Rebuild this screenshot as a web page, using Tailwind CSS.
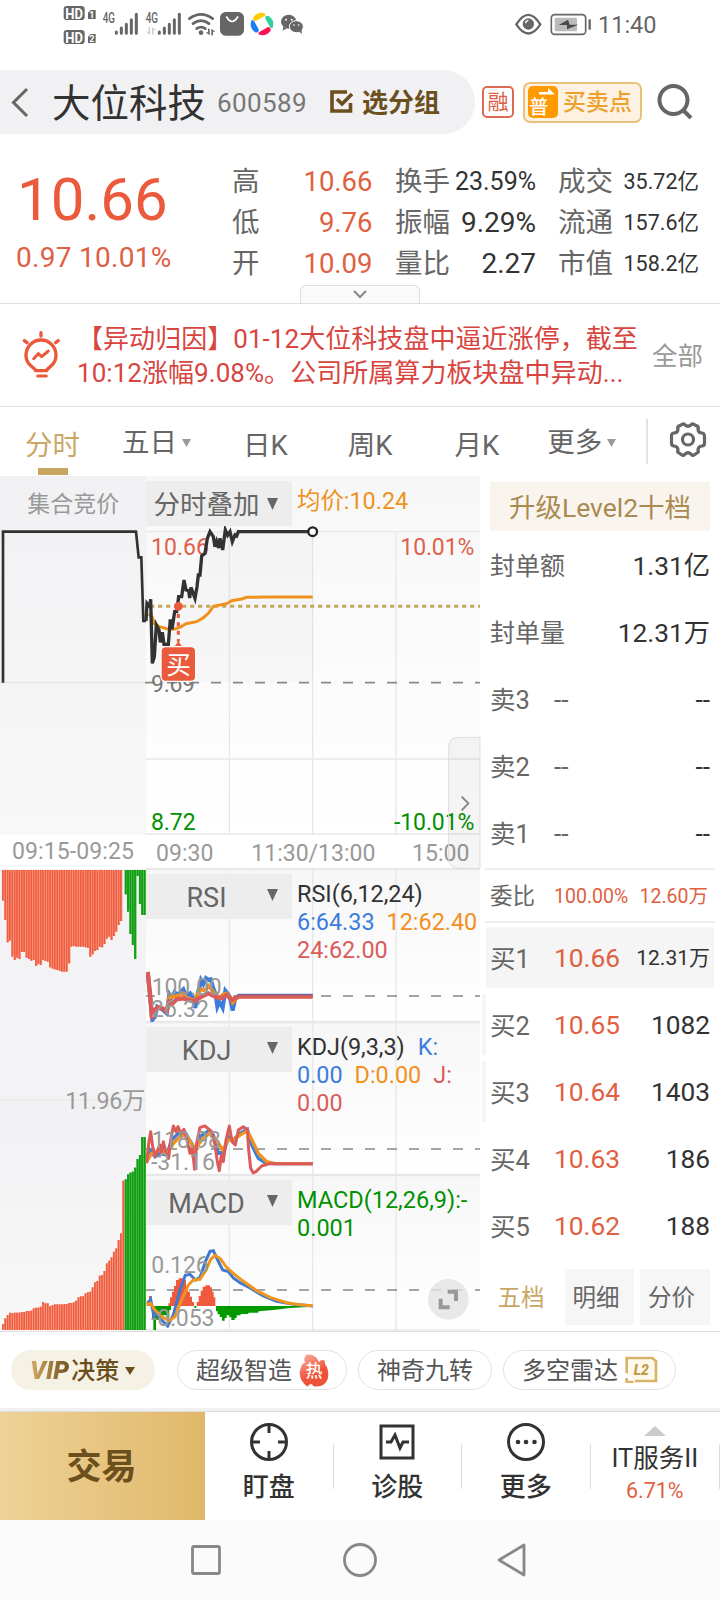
<!DOCTYPE html>
<html lang="zh-CN">
<head>
    <meta charset="UTF-8">
    <meta name="viewport" content="width=device-width, initial-scale=1.0">
    <title>大位科技 600589</title>
    <script src="https://cdn.jsdelivr.net/npm/@tailwindcss/browser@4"></script>
</head>
<body class="w-[720px] h-[1600px] overflow-hidden bg-white text-[#323232] font-['Roboto','Noto_Sans_CJK_SC',sans-serif]">

    <!-- Status bar -->
    <div class="h-[70px] flex items-start">
        <svg class="ml-[60px] w-[250px] h-[50px]" viewBox="180 0 750 150" fill="#666">
            <rect x="191" y="18" width="63" height="42" rx="10"/>
            <rect x="191" y="90" width="63" height="42" rx="10"/>
            <g fill="#fff" font-weight="700" font-size="46">
                <text x="196" y="56" textLength="53" lengthAdjust="spacingAndGlyphs">HD</text>
                <text x="196" y="128" textLength="53" lengthAdjust="spacingAndGlyphs">HD</text>
            </g>
            <path d="M264 38l8-8h15v27h-23zM264 110l8-8h15v27h-23z"/>
            <g fill="#fff" font-weight="700" font-size="27">
                <text x="268" y="54">1</text>
                <text x="268" y="126">2</text>
            </g>
            <g font-weight="500" font-size="43">
                <text x="308" y="69" textLength="37" lengthAdjust="spacingAndGlyphs">4G</text>
                <text x="437" y="69" textLength="37" lengthAdjust="spacingAndGlyphs">4G</text>
            </g>
            <g stroke="#666" stroke-width="9" stroke-linecap="round">
                <path d="M349 96v4M364 84v16M379 73v27M394 59v41M409 43v57"/>
                <path d="M478 96v4M493 84v16M508 73v27M523 59v41M538 43v57"/>
            </g>
            <path d="M450 82v22l-12-9h8V82zM456 104V82l12 9h-8v13z" fill="#ccc"/>
            <g fill="none" stroke="#666" stroke-width="8" stroke-linecap="round">
                <path d="M568 56q35-26 70 0M579 71q24-18 48 0M590 86q13-9 26 0"/>
            </g>
            <circle cx="603" cy="98" r="7"/>
            <path d="M629 86v20l-12-9h7V86zM634 106V86l12 9h-7v11z"/>
            <rect x="660" y="36" width="72" height="71" rx="17"/>
            <path d="M680 51q16 27 33 0" fill="none" stroke="#fff" stroke-width="5" stroke-linecap="round"/>
            <g transform="translate(786 72)">
                <path d="M-27-19Q-12-40 10-31Q14-27 4-22L-15-11Q-26-5-27-19z" fill="#ffcb00"/>
                <path d="M19-25Q40-12 32 11Q28 17 23 7L11-14Q6-24 19-25z" fill="#2fd0a0"/>
                <path d="M26 20Q10 40-10 31Q-14 27-4 22L14 11Q26 5 26 20z" fill="#ff0f55"/>
                <path d="M-18 26Q-40 12-32-10Q-28-16-22-6L-11 14Q-6 25-18 26z" fill="#1c7df5"/>
            </g>
            <ellipse cx="866" cy="65" rx="23" ry="21"/>
            <path d="M850 80l-2 12 13-7z"/>
            <ellipse cx="889" cy="80" rx="21" ry="18" stroke="#fff" stroke-width="3"/>
            <path d="M896 94l10 8-2-14z"/>
            <g fill="#fff">
                <circle cx="858" cy="59" r="3"/><circle cx="875" cy="59" r="3"/>
                <circle cx="882" cy="75" r="2.5"/><circle cx="896" cy="75" r="2.5"/>
            </g>
        </svg>
        <svg class="ml-[204px] w-[80px] h-[50px]" viewBox="462 0 240 150" fill="none" stroke="#666">
            <path d="M469 73Q505 16 541 73Q505 128 469 73z" stroke-width="7"/>
            <circle cx="505" cy="72" r="17" fill="#666" stroke="none"/>
            <path d="M497 70q0-8 8-9" stroke="#fff" stroke-width="4"/>
            <rect x="574" y="44" width="103" height="59" rx="10" stroke-width="5"/>
            <rect x="584" y="53" width="67" height="41" rx="4" fill="#bbb" stroke="none"/>
            <path d="M624 59l-28 16h25v13l34-14h-26z" fill="#4a4a4a" stroke="none"/>
            <path d="M689 58v31" stroke-width="7"/>
        </svg>
        <span class="ml-[4px] mt-[9px] text-[23.500px] leading-[32px] text-[#666]">11:40</span>
    </div>

    <!-- Stock header -->
    <div class="h-[64px] flex items-center">
        <div class="w-[475px] h-[64px] bg-[#f1f1f4] rounded-r-full flex items-center">
            <svg class="ml-[10px] w-[20px] h-[32px]" viewBox="0 0 20 32" fill="none" stroke="#666" stroke-width="3"><path d="M17 3L3.500 16.500 17 30"/></svg>
            <span class="ml-[22px] pt-[4px] text-[38.500px] leading-[60px]">大位科技</span>
            <span class="ml-[11px] pt-[2px] text-[26px] tracking-[0.4px] text-[#777]">600589</span>
            <svg class="ml-[22px] w-[26px] h-[26px]" viewBox="0 0 26 26" fill="none" stroke="#6b4f1d" stroke-width="3.600"><path d="M18 3H3v19h18.500v-8M8 10l5 5L23 5"/></svg>
            <span class="ml-[7px] pt-[3px] text-[26px] font-bold text-[#6b4f1d]">选分组</span>
        </div>
        <div class="ml-[7px] w-[32px] h-[32px] border-2 border-[#dd6a55] rounded-[5px] flex items-center justify-center text-[21px] leading-none text-[#dd5a44]">融</div>
        <div class="ml-[9px] w-[119px] h-[41px] border-2 border-[#e9c27a] rounded-[7px] bg-[#fdf1e2] flex items-center">
            <svg class="ml-[3px] w-[30px] h-[32px]" viewBox="0 0 30 32">
                <rect width="30" height="32" rx="5" fill="#ff9900"/>
                <path d="M11 8.500h16L20 2v4h-9z" fill="#fff"/>
                <text x="1" y="28" font-size="19.500" font-weight="500" fill="#fff">普</text>
            </svg>
            <span class="ml-[5px] pt-[2px] text-[23px] font-medium text-[#eea02e]">买卖点</span>
        </div>
        <svg class="ml-[14px] w-[38px] h-[38px]" viewBox="0 0 38 38" fill="none" stroke="#666" stroke-width="4"><circle cx="17.500" cy="17" r="14"/><path d="M27 27l8 8"/></svg>
    </div>

    <!-- Quote -->
    <div class="relative h-[170px] border-b border-[#dfdfdf] flex text-[27.500px]">
        <div class="w-[232px] pl-[16px] text-[#eb5a3c]">
            <div class="mt-[31px] text-[60px] leading-[70px] pl-[1px]">10.66</div>
            <div class="mt-[5px] text-[28px] leading-[36px] whitespace-nowrap text-[#de6044] tracking-[0.3px]">0.97 10.01%</div>
        </div>
        <div class="w-[140.500px] pt-[27px] leading-[41px] text-[#e0603f]">
            <div class="flex justify-between"><span class="text-[#666]">高</span><span>10.66</span></div>
            <div class="flex justify-between"><span class="text-[#666]">低</span><span>9.76</span></div>
            <div class="flex justify-between"><span class="text-[#666]">开</span><span>10.09</span></div>
        </div>
        <div class="ml-[22.500px] w-[141px] pt-[27px] leading-[41px]">
            <div class="flex justify-between"><span class="text-[#666]">换手</span><span class="text-[25px]">23.59%</span></div>
            <div class="flex justify-between"><span class="text-[#666]">振幅</span><span class="text-[28px]">9.29%</span></div>
            <div class="flex justify-between"><span class="text-[#666]">量比</span><span class="text-[28px]">2.27</span></div>
        </div>
        <div class="ml-[22px] w-[141px] pt-[27px] leading-[41px]">
            <div class="flex justify-between"><span class="text-[#666]">成交</span><span class="text-[21.500px]">35.72亿</span></div>
            <div class="flex justify-between"><span class="text-[#666]">流通</span><span class="text-[21.500px]">157.6亿</span></div>
            <div class="flex justify-between"><span class="text-[#666]">市值</span><span class="text-[21.500px]">158.2亿</span></div>
        </div>
        <div class="absolute left-[300px] bottom-0 w-[120px] h-[18px] border border-b-0 border-[#dfdfdf] rounded-t-[6px] bg-[#fafafa] flex justify-center">
            <svg class="mt-[4px] w-[16px] h-[10px]" viewBox="0 0 16 10" fill="none" stroke="#888" stroke-width="2"><path d="M2 1l6 6 6-6"/></svg>
        </div>
    </div>

    <!-- Notice -->
    <div class="h-[103px] border-b border-[#dfdfdf] flex items-center">
        <svg class="ml-[21px] w-[40px] h-[50px]" viewBox="0 0 120 150" fill="none" stroke="#e9593a" stroke-width="10" stroke-linecap="round" stroke-linejoin="round">
            <path d="M44 122h33M44 120L24 102A45 45 0 1 1 96 102L77 120M60 8v10M10 32l8 6M112 32l-8 6"/>
            <path d="M38 86l14-15 10 9 20-17" stroke-width="9"/>
            <path d="M50 138h26" stroke-width="9"/>
        </svg>
        <p class="ml-[16px] pt-[2px] w-[575px] text-[26px] leading-[34px] tracking-[0.05px] text-[#d84540] whitespace-nowrap">【异动归因】01-12大位科技盘中逼近涨停，截至<br>10:12涨幅9.08%。公司所属算力板块盘中异动...</p>
        <span class="pt-[2px] text-[25.500px] text-[#999]">全部</span>
    </div>

    <!-- Period tabs -->
    <div class="h-[69px] flex text-[27.500px] leading-[40px] text-[#666] whitespace-nowrap">
        <div class="ml-[25px] w-[55px] pt-[19px] text-[#c9a665] flex flex-col items-center">分时<i class="mt-[2px] w-[30px] h-[7px] bg-[#c9a660]"></i></div>
        <div class="ml-[42px] pt-[16px] flex items-center h-[56px]">五日<svg class="ml-[5px] w-[9px] h-[8px]" viewBox="0 0 9 8" fill="#999"><path d="M0 0h9L4.500 8z"/></svg></div>
        <div class="ml-[52px] pt-[19px]">日K</div>
        <div class="ml-[60px] pt-[19px]">周K</div>
        <div class="ml-[62px] pt-[19px]">月K</div>
        <div class="ml-[48px] pt-[16px] flex items-center h-[56px]">更多<svg class="ml-[5px] w-[9px] h-[8px]" viewBox="0 0 9 8" fill="#999"><path d="M0 0h9L4.500 8z"/></svg></div>
        <div class="ml-auto mt-[12px] w-[2px] h-[45px] bg-[#e2e2e2]"></div>
        <svg class="ml-[21px] mr-[13px] mt-[14px] w-[38px] h-[38px]" viewBox="0 0 38 38" fill="none" stroke="#666" stroke-width="3.200" stroke-linejoin="round">
            <path d="M13 3.500Q15 2 16 4Q19 6.500 22 4Q23 2 25 3.500L28 5Q30 6 29 8Q29 12 33 12Q35 12 35.500 15V22Q35.500 25 33 25Q29 25.500 29 29Q30 31 28 32L25 34Q23 35 22 33Q19 30.500 16 33Q15 35 13 34L10 32Q8 31 9 29Q9 25.500 5 25Q2.500 25 2.500 22V15Q2.500 12 5 12Q9 12 9 8Q8 6 10 5z"/>
            <circle cx="19" cy="18.500" r="5.500"/>
        </svg>
    </div>

    <!-- Charts and order book -->
    <div class="h-[855px] flex">

        <!-- Call auction column -->
        <div class="w-[146px]">
            <svg class="block w-[146px] h-[393px]" viewBox="0 18 438 1179" fill="none">
                <defs>
                    <linearGradient id="auctionBg" x1="0" y1="0" x2="0" y2="1"><stop offset="0" stop-color="#f1f1f4"/><stop offset="1" stop-color="#f8f8f8"/></linearGradient>
                </defs>
                <rect x="0" y="18" width="438" height="1077" fill="url(#auctionBg)"/>
                <path d="M0 638H438" stroke="#e4e4e6" stroke-width="4"/>
                <path d="M9 638V185H408L416 262H424L430 453H438" stroke="#323232" stroke-width="8"/>
                <text x="82" y="125" font-size="69" fill="#999">集合竞价</text>
                <text x="36" y="1166" font-size="69" fill="#999" textLength="366">09:15-09:25</text>
            </svg>
            <svg class="block w-[146px] h-[462px]" viewBox="0 27 438 1386">
                <rect x="0" y="27" width="438" height="690" fill="#f3f3f5"/>
                <rect x="0" y="717" width="438" height="696" fill="url(#auctionBg)"/>
                <path d="M0 719H438" stroke="#e8e8e8" stroke-width="4"/>
                <g id="bars"></g>
                <text x="196" y="746" font-size="70" fill="#999" textLength="240">11.96万</text>
            </svg>
        </div>

        <!-- Intraday column -->
        <div class="w-[334px]">
            <!-- price -->
            <div class="relative h-[393px]">
                <svg class="absolute inset-0 w-[334px] h-[393px] overflow-visible" viewBox="438 18 1002 1179" fill="none">
                    <defs>
                        <linearGradient id="panelBg" x1="0" y1="0" x2="0" y2="1"><stop offset="0" stop-color="#f7f7f7"/><stop offset="1" stop-color="#fff"/></linearGradient>
                    </defs>
                    <rect x="438" y="18" width="1002" height="1077" fill="url(#panelBg)"/>
                    <path d="M438 185H1440M438 867H1440M438 1092H1440M688 185V1095M938 185V1095M1188 185V1095M438 1196H1440" stroke="#e8e8e8" stroke-width="4"/>
                    <path d="M452 400L457 580 463 560 469 465 488 490 505 523 524 425 552 330 572 350 585 385 605 260 630 185H938V638H452z" fill="#000" fill-opacity=".018"/>
                    <path d="M435 638H1440" stroke="#888" stroke-width="5" stroke-dasharray="30 36"/>
                    <g font-size="69">
                        <text x="453" y="255" fill="#e0604a" textLength="174">10.66</text>
                        <text x="1201" y="255" fill="#e0604a" textLength="222">10.01%</text>
                        <text x="453" y="666" fill="#777" textLength="132">9.69</text>
                        <text x="453" y="1080" fill="#009100" textLength="134">8.72</text>
                        <text x="1182" y="1080" fill="#009100" textLength="241">-10.01%</text>
                        <g fill="#999">
                            <text x="468" y="1172" textLength="172">09:30</text>
                            <text x="754" y="1172" textLength="372">11:30/13:00</text>
                            <text x="1236" y="1172" textLength="172">15:00</text>
                        </g>
                    </g>
                    <path d="M450 409H1440" stroke="#c8a860" stroke-width="9" stroke-dasharray="13 11"/>
                    <path d="M446 432L456 440 464 462 478 470 500 476 520 478 540 472 558 461 590 455 610 443 625 430 640 409 680 401 695 392 725 387 740 382 800 381H938" stroke="#f0911e" stroke-width="9"/>
                    <path d="M438 453L441 400 449 410 452 388 457 580 463 560 469 465 477 480 481 517 487 487 492 523H505L511 448 516 478 524 425 530 425 536 380H545L552 330 558 360 566 362 569 384 573 352 585 385 591 350 595 315H600L605 258 615 250 622 205 630 185 640 200 645 230 650 214 656 234 660 205 668 240 676 180 683 196 690 185 697 215 705 195 710 198 715 185H938" stroke="#323232" stroke-width="10"/>
                    <circle cx="938" cy="185" r="13" fill="#fff" stroke="#222" stroke-width="7"/>
                    <circle cx="535" cy="409" r="13" fill="#eb5a3c"/>
                    <path d="M535 432V515" stroke="#eb5a3c" stroke-width="9" stroke-dasharray="12 13"/>
                    <path d="M522 532l13-18 13 18z" fill="#eb5a3c"/>
                    <rect x="483" y="530" width="104" height="104" rx="14" fill="#eb5a3c" stroke="#fff" stroke-width="4"/>
                    <text x="499" y="612" font-size="74" fill="#fff">买</text>
                    <path d="M1440 802H1376Q1346 802 1346 832V1165Q1346 1195 1376 1195H1440z" fill="#000" fill-opacity=".04" stroke="#ddd" stroke-width="3"/>
                    <path d="M1386 980l20 20-20 21" transform="translate(-20 0)" stroke="none"/>
                    <path d="M1386 980l20 20-20 21" transform="translate(-1 0)" stroke="#888" stroke-width="6"/>
                </svg>
                <div class="relative flex pt-[5px]">
                    <div class="w-[146px] h-[45px] bg-[#ededed] flex items-center text-[26.500px] text-[#666]"><span class="w-[121px] pt-[3px] text-center">分时叠加</span><svg class="w-[11px] h-[12px]" viewBox="0 0 11 12" fill="#666"><path d="M0 0h11L5.500 12z"/></svg></div>
                    <div class="ml-[5px] mt-[5px] text-[23.400px] leading-[30px] text-[#f0911e]">均价:10.24</div>
                </div>
            </div>

            <!-- RSI -->
            <div class="relative h-[153px]">
                <svg class="absolute inset-0 w-[334px] h-[153px]" viewBox="438 27 1002 459" fill="none">
                    <rect x="438" y="27" width="1002" height="459" fill="url(#panelBg)"/>
                    <path d="M438 29H1440M438 484H1440M688 27V486M938 27V486M1188 27V486" stroke="#e8e8e8" stroke-width="4"/>
                    <path d="M435 408H1440" stroke="#888" stroke-width="5" stroke-dasharray="30 36"/>
                    <path d="M443 336L450 405 457 480 465 470 472 440 486 448 500 460 508 402 515 412 524 396 530 405 540 398 550 388 558 408 570 400 578 415 586 444 594 395 598 385 603 360 610 372 618 354 626 360 632 358 640 385 646 400 652 440 658 425 668 444 676 392 684 402 690 412 698 452 706 415 716 407H938" stroke="#3c7cdc" stroke-width="12"/>
                    <path d="M443 336L455 465 475 440 500 450 508 412 530 408 550 400 560 414 585 422 596 395 605 388 615 392 625 378 636 390 645 402 660 415 668 404 680 400 690 412 698 428 716 409H938" stroke="#f0911e" stroke-width="11"/>
                    <path d="M443 336L450 400 456 476 462 450 475 442 488 446 500 455 508 425 518 430 530 418 550 415 565 420 580 424 605 410 625 400 650 412 665 414 680 405 695 420 716 410H938" stroke="#d95c5a" stroke-width="13"/>
                    <path d="M714 404H938" stroke="#7a5f94" stroke-width="4"/>
                    <g font-size="69" fill="#999">
                        <text x="455" y="405" textLength="210">100.00</text>
                        <text x="453" y="472" textLength="174">26.32</text>
                    </g>
                </svg>
                <div class="relative flex pt-[5px]">
                    <div class="w-[146px] h-[45px] bg-[#ededed] flex items-center text-[27px] text-[#666]"><span class="w-[121px] pt-[3px] text-center">RSI</span><svg class="-mt-[3px] w-[11px] h-[12px]" viewBox="0 0 11 12" fill="#666"><path d="M0 0h11L5.500 12z"/></svg></div>
                    <div class="ml-[5px] mt-[6px] text-[23.400px] leading-[28px] whitespace-nowrap">RSI(6,12,24)<br><span class="text-[#3c7cdc]">6:64.33</span><span class="ml-[12px] text-[#f0911e]">12:62.40</span><br><span class="text-[#d95c5a]">24:62.00</span></div>
                </div>
            </div>

            <!-- KDJ -->
            <div class="relative h-[153px]">
                <svg class="absolute inset-0 w-[334px] h-[153px]" viewBox="438 -204 1002 459" fill="none">
                    <rect x="438" y="-204" width="1002" height="459" fill="url(#panelBg)"/>
                    <path d="M438 -202H1440M438 253H1440M688 -204V255M938 -204V255M1188 -204V255" stroke="#e8e8e8" stroke-width="4"/>
                    <path d="M435 177H1440" stroke="#888" stroke-width="5" stroke-dasharray="30 36"/>
                    <path d="M440 215L450 180 465 200 480 190 500 195 515 150 535 130 555 128 575 160 585 180 600 140 622 125 640 135 655 190 672 185 685 140 700 150 720 130 742 118 755 165 775 205 795 218 820 221H938" stroke="#3c7cdc" stroke-width="10"/>
                    <path d="M440 215L455 190 480 182 505 185 520 160 545 135 560 138 585 178 605 150 628 130 645 145 668 180 685 150 705 145 742 122 756 150 775 190 800 215 825 221H938" stroke="#f0911e" stroke-width="10"/>
                    <path d="M440 220L446 160 452 125 458 170 466 200 475 175 480 165 484 190 490 155 500 195 506 205 512 150 520 108 528 125 534 110 542 130 552 118 560 145 570 190 576 170 584 238 590 160 600 112 615 108 635 125 645 165 652 215 658 242 664 195 670 215 678 150 688 108 696 155 706 165 715 120 730 110 742 120 746 180 752 235 760 249 768 245 785 228 810 221H938" stroke="#dc5b58" stroke-width="9" stroke-linejoin="round"/>
                    <g font-size="69" fill="#999">
                        <text x="455" y="174" textLength="208">118.98</text>
                        <text x="453" y="240" textLength="192">-31.16</text>
                    </g>
                </svg>
                <div class="relative flex pt-[5px]">
                    <div class="w-[146px] h-[45px] bg-[#ededed] flex items-center text-[27px] text-[#666]"><span class="w-[121px] pt-[3px] text-center">KDJ</span><svg class="-mt-[3px] w-[11px] h-[12px]" viewBox="0 0 11 12" fill="#666"><path d="M0 0h11L5.500 12z"/></svg></div>
                    <div class="ml-[5px] mt-[6px] text-[23.400px] leading-[28px] whitespace-nowrap">KDJ(9,3,3)<span class="ml-[13px] text-[#3c7cdc]">K:<br>0.00</span><span class="ml-[12px] text-[#f0911e]">D:0.00</span><span class="ml-[12px] text-[#d95c5a]">J:<br>0.00</span></div>
                </div>
            </div>

            <!-- MACD -->
            <div class="relative h-[156px]">
                <svg class="absolute inset-0 w-[334px] h-[156px]" viewBox="438 255 1002 468" fill="none">
                    <rect x="438" y="255" width="1002" height="468" fill="url(#panelBg)"/>
                    <path d="M438 257H1440M438 720H1440M688 255V720M938 255V720M1188 255V720" stroke="#e8e8e8" stroke-width="4"/>
                    <path d="M435 600H1440" stroke="#888" stroke-width="5" stroke-dasharray="30 36"/>
                    <path d="M440 648V632H447V618H455V648zM505 648V640H510V622H516V605H522V588H528V570H536V565H550V570H558V590H564V605H570V620H576V636H582V648zM590 648V636H596V618H602V602H608V590H616V586H630V592H636V605H641V622H646V648z" fill="#f05a3c"/>
                    <path d="M456 648V690H460V720H468V690H476V676H500V684H508V660H513V648zM583 648v6h6v-6zM648 648V664H653V673H659V681H666V692H674V684H680V676H688V682H694V690H704V684H710V676H722V672H745V668H775V664L820 660 870 654 938 650V648z" fill="#009a00"/>
                    <path d="M444 640L452 628 462 680 470 670 485 690 503 708 520 675 540 600 556 556 570 553 586 570 600 562 618 510 630 484 640 482 652 508 668 540 685 545 700 564 720 578 750 594 790 618 830 634 880 643 938 648" stroke="#3f79d0" stroke-width="9"/>
                    <path d="M440 644L452 640 465 660 485 680 508 692 525 680 545 630 565 585 580 570 600 568 618 540 632 508 645 496 660 505 680 532 700 550 730 574 770 602 810 622 860 638 900 644 938 647" stroke="#f0961e" stroke-width="9"/>
                    <g font-size="69" fill="#999">
                        <text x="454" y="549" textLength="172">0.126</text>
                        <text x="453" y="708" textLength="190">-0.053</text>
                    </g>
                    <circle cx="1345" cy="628" r="61" fill="#e2e2e2" fill-opacity=".8"/>
                    <path d="M1343 605h25v28M1322 626v26h27" stroke="#999" stroke-width="12"/>
                </svg>
                <div class="relative flex pt-[5px]">
                    <div class="w-[146px] h-[45px] bg-[#ededed] flex items-center text-[27px] text-[#666]"><span class="w-[121px] pt-[3px] text-center">MACD</span><svg class="-mt-[3px] w-[11px] h-[12px]" viewBox="0 0 11 12" fill="#666"><path d="M0 0h11L5.500 12z"/></svg></div>
                    <div class="ml-[5px] mt-[6px] text-[23.500px] leading-[28px] whitespace-nowrap text-[#009100]">MACD(12,26,9):-<br>0.001</div>
                </div>
            </div>
        </div>

        <!-- Order book -->
        <div class="w-[240px] pt-[6px] text-[26.300px]">
            <div class="ml-[10px] w-[220px] h-[49px] pt-[3px] bg-[#f9f5ee] flex items-center justify-center text-[26.500px] text-[#a98a50]">升级Level2十档</div>
            <div class="mt-[2px] pl-[10px] pr-[10px] leading-[67px]">
                <div class="flex justify-between"><span class="text-[25px] text-[#666]">封单额</span><span>1.31亿</span></div>
                <div class="flex justify-between"><span class="text-[25px] text-[#666]">封单量</span><span>12.31万</span></div>
                <div class="flex"><span class="w-[64px] text-[25.500px] text-[#666]">卖3</span><span class="text-[#666]">--</span><span class="ml-auto">--</span></div>
                <div class="flex"><span class="w-[64px] text-[25.500px] text-[#666]">卖2</span><span class="text-[#666]">--</span><span class="ml-auto">--</span></div>
                <div class="flex"><span class="w-[64px] text-[25.500px] text-[#666]">卖1</span><span class="text-[#666]">--</span><span class="ml-auto">--</span></div>
            </div>
            <div class="ml-[5px] w-[230px] h-[55px] border-y-2 border-[#eee] flex items-center pt-[2px] pl-[5px] pr-[7px] text-[19.500px] text-[#e0603f]"><span class="w-[64px] text-[22.500px] text-[#666]">委比</span><span>100.00%</span><span class="ml-auto">12.60万</span></div>
            <div class="mt-[4px] ml-[6px] w-[228px] h-[61px] bg-[#f5f5f5] flex items-center pt-[3px] pl-[4px] pr-[4px]"><span class="w-[64px] text-[25.500px] text-[#666]">买1</span><span class="text-[#e0603f]">10.66</span><span class="ml-auto text-[21px]">12.31万</span></div>
            <div class="mt-[6px] ml-[2px] w-[228px] h-[61px] border-l-4 border-[#f5f5f5] flex items-center pt-[3px] pl-[4px]"><span class="w-[64px] text-[25.500px] text-[#666]">买2</span><span class="text-[#e0603f]">10.65</span><span class="ml-auto">1082</span></div>
            <div class="mt-[6px] ml-[2px] w-[228px] h-[61px] border-l-4 border-[#f5f5f5] flex items-center pt-[3px] pl-[4px]"><span class="w-[64px] text-[25.500px] text-[#666]">买3</span><span class="text-[#e0603f]">10.64</span><span class="ml-auto">1403</span></div>
            <div class="mt-[6px] ml-[6px] w-[224px] h-[61px] flex items-center pt-[3px] pl-[4px]"><span class="w-[64px] text-[25.500px] text-[#666]">买4</span><span class="text-[#e0603f]">10.63</span><span class="ml-auto">186</span></div>
            <div class="mt-[6px] ml-[6px] w-[224px] h-[61px] flex items-center pt-[3px] pl-[4px]"><span class="w-[64px] text-[25.500px] text-[#666]">买5</span><span class="text-[#e0603f]">10.62</span><span class="ml-auto">188</span></div>
            <div class="mt-[13px] flex h-[56px] leading-[58px] text-[23.500px] text-center text-[#666]">
                <span class="ml-[10px] w-[69px] pr-[7px] text-[#c9a665]">五档</span>
                <span class="ml-[6px] w-[69px] bg-[#f6f6f6] pr-[7px]">明细</span>
                <span class="ml-[6px] w-[70px] bg-[#f6f6f6] pr-[7px]">分价</span>
            </div>
        </div>
    </div>

    <!-- Feature pills -->
    <div class="h-[77px] border-t border-[#dfdfdf] flex items-start pt-[18px] text-[24px] text-[#555]">
        <div class="ml-[11px] w-[144px] h-[40px] pt-[2px] rounded-full bg-[#f6f1e5] flex items-center pl-[19px] font-medium text-[#6b4f1d]"><span class="text-[25px] font-black italic bg-gradient-to-r from-[#d5ad63] to-[#6b4f1d] bg-clip-text text-transparent pr-[2px]">VIP</span>决策<svg class="ml-[6px] w-[10px] h-[8px]" viewBox="0 0 10 8" fill="#6b4f1d"><path d="M0 0h10L5 8z"/></svg></div>
        <div class="ml-[22px] w-[170px] h-[40px] pt-[2px] rounded-full border border-[#e2e2e2] flex items-center pl-[18px]">超级智造
            <svg class="ml-[7px] -mt-[2px] w-[30px] h-[33px]" viewBox="0 0 90 99">
                <defs><linearGradient id="hot" x1="0" y1="0" x2="0.500" y2="1"><stop offset="0" stop-color="#f9b5a8"/><stop offset="0.700" stop-color="#ee5238"/></linearGradient></defs>
                <path d="M22 2Q50-2 60 25Q66 14 78 20Q76 32 84 40Q94 70 80 86Q66 100 44 97L38 90 30 92 26 98Q0 80 2 52L10 30 18 26Q12 12 22 2z" fill="url(#hot)"/>
                <text x="20" y="70" font-size="50" font-weight="500" fill="#fff">热</text>
            </svg>
        </div>
        <div class="ml-[11px] w-[134px] h-[40px] pt-[2px] rounded-full border border-[#e2e2e2] flex items-center justify-center">神奇九转</div>
        <div class="ml-[11px] w-[173px] h-[40px] pt-[2px] rounded-full border border-[#e2e2e2] flex items-center pl-[18px]">多空雷达
            <svg class="ml-[7px] -mt-[3px] w-[33px] h-[27px]" viewBox="0 0 99 81">
                <path d="M5 52V6H82L93 16V75H30M5 66V78H26" fill="#fdf8ec" stroke="#d9b36a" stroke-width="8"/>
                <text x="26" y="57" font-size="42" font-weight="900" font-style="italic" fill="#c39a4c">L2</text>
            </svg>
        </div>
    </div>
    <div class="h-[4px] bg-[#f0f0f0] border-b border-[#dedede]"></div>

    <!-- Bottom bar -->
    <div class="h-[108px] flex text-[26px]">
        <div class="w-[205px] pt-[4px] pr-[2px] bg-gradient-to-r from-[#eed297] to-[#e0b869] flex items-center justify-center text-[35px] font-bold text-[#6b4f1d]">交易</div>
        <div class="w-[128.500px] flex items-center">
            <div class="flex-1 flex flex-col items-center">
                <svg class="w-[38px] h-[38px] -mt-[4px]" viewBox="0 0 38 38" fill="none" stroke="#323232" stroke-width="3"><circle cx="19" cy="19" r="17.500"/><path d="M19 2v8M19 28v8M2 19h8M28 19h8"/></svg>
                <span class="mt-[8px] leading-[36px] font-medium">盯盘</span>
            </div>
            <i class="w-px h-[45px] bg-[#dedede]"></i>
        </div>
        <div class="w-[128.500px] flex items-center">
            <div class="flex-1 flex flex-col items-center">
                <svg class="w-[38px] h-[38px] -mt-[4px]" viewBox="0 0 38 38" fill="none" stroke="#323232" stroke-width="3"><path d="M3 3h32v32H3zM8 19h5l4-7 5 13 3-6h6"/></svg>
                <span class="mt-[8px] leading-[36px] font-medium">诊股</span>
            </div>
            <i class="w-px h-[45px] bg-[#dedede]"></i>
        </div>
        <div class="w-[128.500px] flex items-center">
            <div class="flex-1 flex flex-col items-center">
                <svg class="w-[38px] h-[38px] -mt-[4px]" viewBox="0 0 38 38" fill="#323232"><circle cx="19" cy="19" r="17.500" fill="none" stroke="#323232" stroke-width="3"/><circle cx="11" cy="19" r="2.300"/><circle cx="19" cy="19" r="2.300"/><circle cx="27.500" cy="19" r="2.300"/></svg>
                <span class="mt-[8px] leading-[36px] font-medium">更多</span>
            </div>
            <i class="w-px h-[45px] bg-[#dedede]"></i>
        </div>
        <div class="flex-1 flex items-center">
            <div class="flex-1 flex flex-col items-center">
                <svg class="w-[22px] h-[10px]" viewBox="0 0 22 10" fill="#ccc"><path d="M11 0l11 10H0z"/></svg>
                <span class="mt-[6px] text-[25.500px] leading-[32px]">IT服务II</span>
                <span class="mt-[2px] text-[21.500px] leading-[30px] text-[#e0603f]">6.71%</span>
            </div>
            <i class="w-px h-[45px] bg-[#dedede]"></i>
        </div>
    </div>

    <!-- Android navigation -->
    <div class="h-[80px] bg-[#fbfbfb] flex items-center justify-center gap-[120px]">
        <svg class="w-[34px] h-[34px]" viewBox="0 0 34 34" fill="none" stroke="#888" stroke-width="2.800"><rect x="3.500" y="3.500" width="27" height="27" rx="1.500"/></svg>
        <svg class="w-[34px] h-[34px]" viewBox="0 0 34 34" fill="none" stroke="#888" stroke-width="2.800"><circle cx="17" cy="17" r="15.500"/></svg>
        <svg class="w-[34px] h-[34px]" viewBox="0 0 34 34" fill="none" stroke="#888" stroke-width="2.800" stroke-linejoin="round"><path d="M27 2V32L2 17z"/></svg>
    </div>

    <script>
        // unmatched volume hangs from the top, matched volume stands on the baseline
        const upper = [122,180,247,242,290,300,293,297,276,276,293,297,302,300,318,312,315,300,303,305,322,326,328,330,332,335,335,335,310,260,258,260,260,260,260,262,264,290,283,273,270,260,262,252,236,230,240,228,215,195,183,0,103,155,222,255,297,48,132,165,165];
        const lower = [702,685,675,668,669,668,668,668,666,666,663,663,662,655,653,653,650,636,640,640,648,645,643,643,643,643,642,642,639,639,637,632,622,619,619,610,607,605,592,577,573,557,555,543,520,512,502,485,475,450,430,272,268,253,248,245,233,207,195,141,141];
        const step = 432 / 61;

        function bar(i, y, h, color, light) {
            const x = 6 + i * step;
            return `<rect x="${x}" y="${y}" width="${step}" height="${h}" fill="${light}"/><rect x="${x}" y="${y}" width="${step - 2}" height="${h}" fill="${color}"/>`;
        }

        let html = '';
        upper.forEach((end, i) => {
            if (end) html += bar(i, 30, end - 30, i < 52 ? '#ee5d40' : '#0f9a10', i < 52 ? '#ff9a80' : '#4cc04c');
        });
        lower.forEach((top, i) => {
            html += bar(i, top + 690, 720 - top, i < 52 ? '#ee5d40' : '#0f9a10', i < 52 ? '#ffa890' : '#4cc04c');
        });
        document.getElementById('bars').innerHTML = html;
    </script>
</body>
</html>
